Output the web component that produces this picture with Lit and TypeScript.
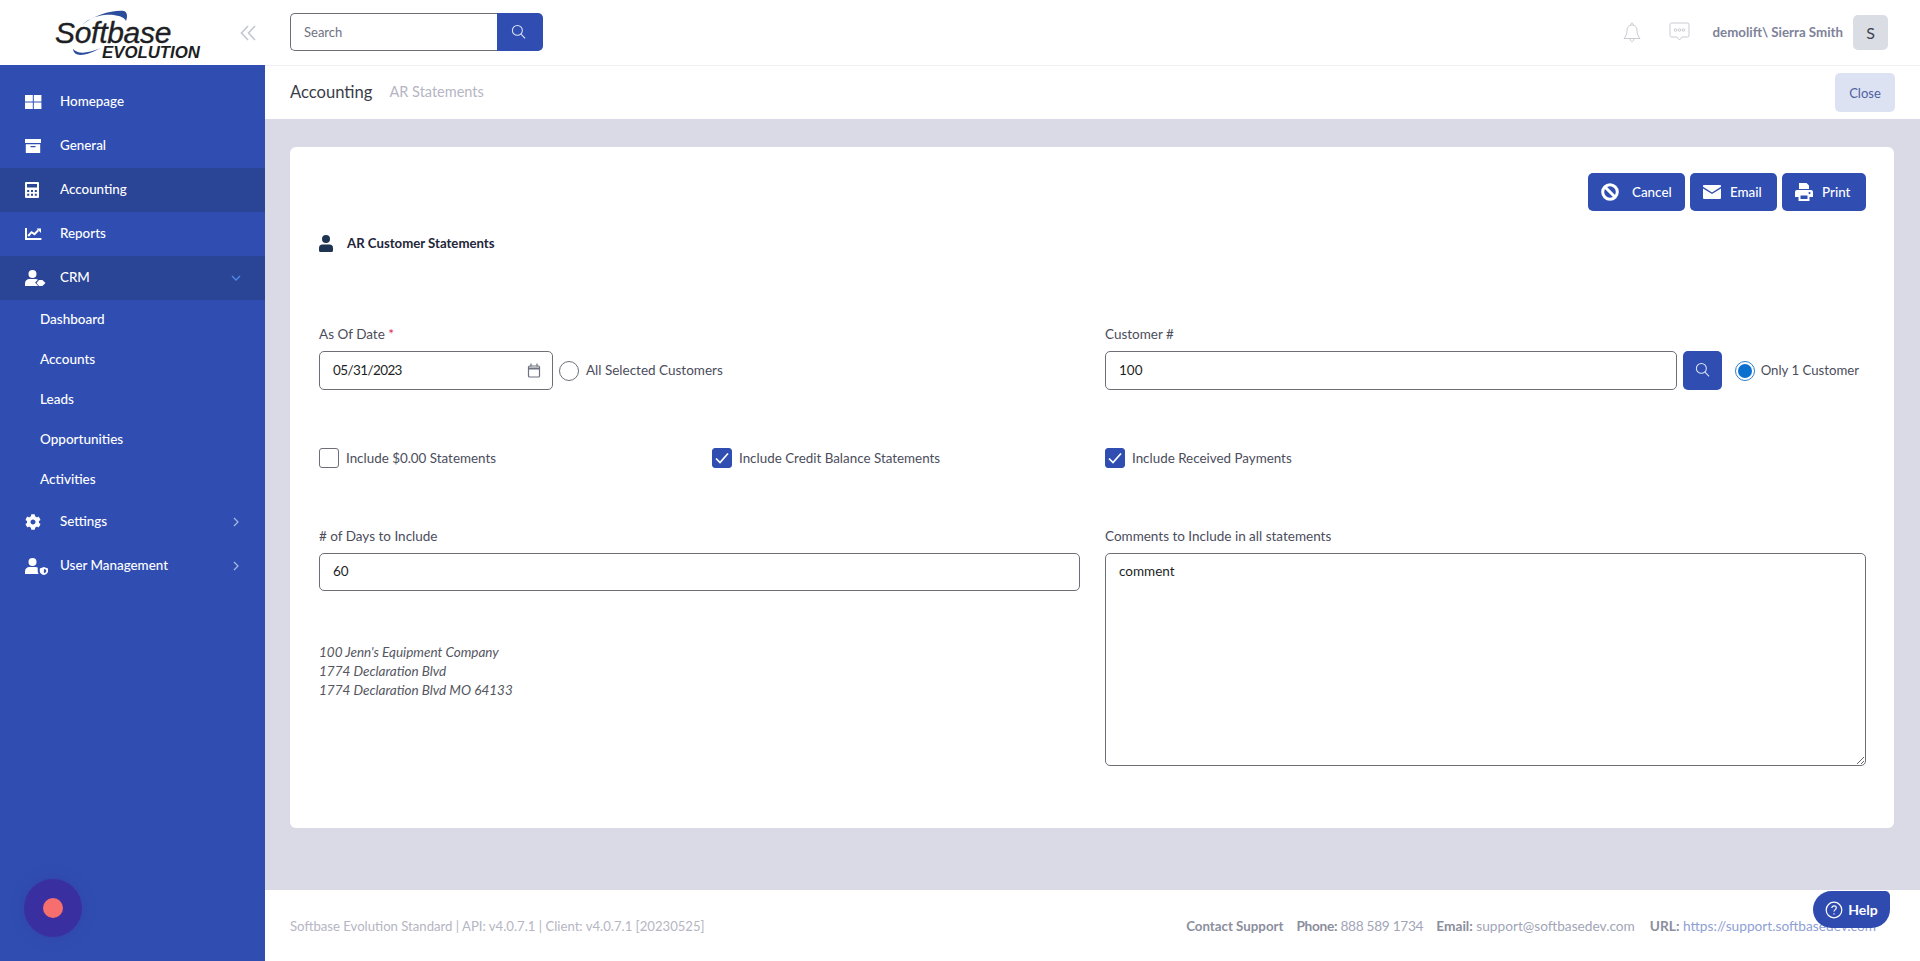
import { LitElement, html, css, svg } from "lit";
import { customElement } from "lit/decorators.js";

const COG =
  "M487.4 315.7l-42.6-24.6c4.3-23.2 4.3-47 0-70.2l42.6-24.6c4.9-2.8 7.1-8.6 5.5-14-11.1-35.6-30-67.8-54.7-94.6-3.8-4.1-10-5.1-14.8-2.3L380.8 110c-17.9-15.4-38.5-27.3-60.8-35.1V25.8c0-5.6-3.9-10.5-9.4-11.7-36.7-8.2-74.3-7.8-109.2 0-5.5 1.2-9.4 6.1-9.4 11.7V75c-22.2 7.9-42.8 19.8-60.8 35.1L88.7 85.5c-4.9-2.8-11-1.9-14.8 2.3-24.7 26.7-43.6 58.9-54.7 94.6-1.7 5.4.6 11.2 5.5 14L67.3 221c-4.3 23.2-4.3 47 0 70.2l-42.6 24.6c-4.9 2.8-7.1 8.6-5.5 14 11.1 35.6 30 67.8 54.7 94.6 3.8 4.1 10 5.1 14.8 2.3l42.6-24.6c17.9 15.4 38.5 27.3 60.8 35.1v49.2c0 5.6 3.9 10.5 9.4 11.7 36.7 8.2 74.3 7.8 109.2 0 5.5-1.2 9.4-6.1 9.4-11.7v-49.2c22.2-7.9 42.8-19.8 60.8-35.1l42.6 24.6c4.9 2.8 11 1.9 14.8-2.3 24.7-26.7 43.6-58.9 54.7-94.6 1.5-5.5-.7-11.3-5.6-14.1zM256 336c-44.1 0-80-35.9-80-80s35.9-80 80-80 80 35.9 80 80-35.9 80-80 80z";

// sidebar icons, all drawn on a 24x18 box
const icons = {
  home: svg`<path fill="currentColor" d="M0 2h7.800v6.600H0zM8.800 2h7.600v6.600H8.800zM0 9.600h7.800V16H0zM8.800 9.600h7.600V16H8.800z" />`,
  box: svg`<path fill="currentColor" fill-rule="evenodd" d="M0 2h16v4H0zM.8 7.200h14.400V16H.8zM5.500 9v1.200h5V9z" />`,
  calc: svg`<path fill="currentColor" fill-rule="evenodd" d="M1 1h12a1 1 0 0 1 1 1v14a1 1 0 0 1-1 1H1a1 1 0 0 1-1-1V2a1 1 0 0 1 1-1zM2 3v3.500h10V3zM2.200 9v2h2V9zM6 9v2h2V9zM9.800 9v2h2V9zM2.200 12.800v2h2v-2zM6 12.800v2h2v-2zM9.800 12.800v2h2v-2z" />`,
  chart: svg`<path fill="currentColor" d="M0 3h2v10h14.400v2H0z" /><path fill="none" stroke="currentColor" stroke-width="2" d="M3.200 11l3.300-3.800 3 2 3.700-3.900" /><path fill="currentColor" d="M11.600 3.600h4.400v4.400z" />`,
  crm: svg`<circle cx="7.500" cy="5" r="4" fill="currentColor" /><path fill="currentColor" d="M0 17v-2.500C0 11.500 2 10 4.500 10h6c1 0 1.900.3 2.500.8l-2.900 2.800 3.100 3.400z" /><path fill="currentColor" d="M14 11h3.400l3.100 2.900-3.100 3.100H14l-2.500-3.100z" />`,
  mgmt: svg`<circle cx="7.500" cy="5" r="4" fill="currentColor" /><path fill="currentColor" d="M0 17v-2.500C0 11.500 2 10 4.500 10h6c.9 0 1.600.2 2.200.5v3.600c0 1.100.3 2.100.9 2.900z" /><path fill="currentColor" fill-rule="evenodd" d="M18.900 10l4.100 1.500v3c0 1.600-1.600 2.800-4.100 3.500-2.500-.7-4.100-1.900-4.100-3.500v-3zM18.900 11.900v4.300c1.400-.4 2.300-1 2.300-1.700v-1.800z" />`,
  cog: svg`<path fill="currentColor" transform="translate(0 1) scale(0.03125)" d="${COG}" />`,
};

const searchIcon = html`<svg width="15" height="15" viewBox="0 0 16 16" fill="none" stroke="currentColor" stroke-width="1.100"><circle cx="6.800" cy="6.800" r="5.300" /><path d="M10.700 10.700l4.300 4.600" /></svg>`;

@customElement("app-root")
export class AppRoot extends LitElement {
  static styles = css`
    :host {
      display: block;
      height: 100vh;
      font-family: "Lato", "Noto Sans", sans-serif;
      font-size: 14px;
      color: #3f4254;
      overflow: hidden;
    }
    * {
      box-sizing: border-box;
    }
    .page {
      display: flex;
      height: 100%;
      position: relative;
    }

    /* sidebar */
    .side {
      width: 265px;
      flex: none;
      background: #304eb2;
      color: #fff;
      display: flex;
      flex-direction: column;
    }
    .brand {
      height: 65px;
      flex: none;
      background: #fff;
      display: flex;
      align-items: center;
      padding-left: 54px;
      gap: 36px;
    }
    .logo {
      width: 150px;
      height: 56px;
      position: relative;
      color: #1d1f24;
      font-family: "Liberation Sans", sans-serif;
      font-style: italic;
    }
    .logo svg {
      position: absolute;
      left: 0;
      top: 0;
    }
    .logo b {
      position: absolute;
      left: 1px;
      top: 16px;
      font-size: 30px;
      font-weight: 400;
      letter-spacing: -0.3px;
      line-height: 23px;
      -webkit-text-stroke: 0.35px #1d1f24;
    }
    .logo i {
      position: absolute;
      left: 48px;
      top: 40px;
      font-size: 16.8px;
      font-weight: 700;
      line-height: 15px;
    }
    .collapse {
      color: #c4c7d2;
      display: flex;
    }
    .menu {
      padding-top: 15px;
      display: flex;
      flex-direction: column;
    }
    .item {
      height: 44px;
      display: flex;
      align-items: center;
      padding: 0 25px;
      font-size: 13.4px;
      font-weight: 500;
    }
    .item.on {
      background: #2a4496;
    }
    .item .ic {
      width: 35px;
      flex: none;
      display: flex;
    }
    .item .name {
      flex: 1;
      padding-bottom: 3px;
    }
    .item .chev {
      color: #a9b8ea;
      display: flex;
      margin-right: -1px;
    }
    .item .chev.open {
      color: #4f8bea;
    }
    .sub {
      height: 40px;
      display: flex;
      align-items: center;
      padding: 0 0 3px 40px;
      font-size: 13.5px;
      font-weight: 500;
    }
    .rec {
      position: absolute;
      left: 24px;
      bottom: 24px;
      width: 58px;
      height: 58px;
      border-radius: 50%;
      background: #3a2fa0;
      box-shadow: 0 0 14px rgba(58, 47, 160, 0.35);
      display: flex;
      align-items: center;
      justify-content: center;
    }
    .rec span {
      width: 20px;
      height: 20px;
      border-radius: 50%;
      background: #f66e6e;
    }

    /* main column */
    .main {
      flex: 1;
      min-width: 0;
      display: flex;
      flex-direction: column;
      background: #d9dae6;
    }
    .top {
      height: 66px;
      flex: none;
      background: #fff;
      border-bottom: 1px solid #eef0f4;
      display: flex;
      align-items: center;
      padding: 0 32px 1px 25px;
    }
    .search {
      display: flex;
      width: 253px;
      height: 38px;
    }
    .search input {
      flex: 1;
      min-width: 0;
      border: 1px solid #6e6e78;
      border-right: 0;
      border-radius: 5px 0 0 5px;
      padding: 0 13px;
      font: inherit;
      font-size: 13px;
      outline: none;
    }
    .search input::placeholder {
      color: #6f7280;
    }
    .search button {
      width: 46px;
      border: 0;
      border-radius: 0 5px 5px 0;
      background: #304eb2;
      color: #dfe5f7;
      display: flex;
      align-items: center;
      justify-content: center;
      padding: 0 3px 2px 0;
    }
    .top .fill {
      flex: 1;
    }
    .bell {
      color: #c3c5cc;
      display: flex;
      margin-right: 27px;
    }
    .chat {
      color: #c3c5cc;
      display: flex;
      margin-right: 23px;
    }
    .who {
      color: #7e8299;
      font-size: 13.3px;
      font-weight: 700;
      margin-right: 10px;
    }
    .avatar {
      width: 35px;
      height: 35px;
      border-radius: 5px;
      background: #dadde3;
      color: #3f4254;
      font-size: 16px;
      display: flex;
      align-items: center;
      justify-content: center;
    }
    .crumbs {
      height: 53px;
      flex: none;
      background: #fff;
      display: flex;
      align-items: center;
      padding: 0 25px;
    }
    .crumbs h1 {
      margin: 0 17px 2px 0;
      font-size: 16.6px;
      font-weight: 400;
      color: #3a3c48;
    }
    .crumbs span {
      color: #b5b5c3;
      font-size: 14.5px;
      flex: 1;
      margin-bottom: 2px;
    }
    .close {
      width: 60px;
      height: 39px;
      border: 0;
      border-radius: 5px;
      background: #dde2f3;
      color: #4e5f9e;
      font: inherit;
      font-size: 13px;
    }
    .body {
      flex: 1;
      min-height: 0;
      padding: 28px 26px 0 25px;
    }

    /* card */
    .card {
      height: 681px;
      background: #fff;
      border-radius: 6px;
      padding: 26px 28px 0 29px;
    }
    .actions {
      display: flex;
      justify-content: flex-end;
      gap: 5px;
    }
    .btn {
      height: 38px;
      border: 0;
      border-radius: 5px;
      background: #304eb2;
      color: #fff;
      font: inherit;
      font-size: 13.4px;
      font-weight: 500;
      display: flex;
      align-items: center;
      padding: 0 0 0 13px;
      gap: 9px;
    }
    .btn.cancel {
      width: 97px;
      gap: 13px;
    }
    .btn.email {
      width: 87px;
    }
    .btn.print {
      width: 84px;
    }
    .title {
      display: flex;
      align-items: center;
      gap: 14px;
      margin-top: 22px;
      height: 20px;
      color: #23253a;
      font-size: 13.2px;
      font-weight: 700;
    }
    .title svg {
      color: #1f3450;
    }
    .row {
      display: grid;
      grid-template-columns: 1fr 1fr;
      column-gap: 25px;
    }
    .row.r1 {
      margin-top: 73px;
    }
    .row.checks {
      grid-template-columns: 368px 368px 1fr;
      margin-top: 58px;
    }
    .row.r3 {
      margin-top: 60px;
    }
    label.cap {
      display: block;
      height: 17px;
      line-height: 17px;
      font-size: 13.5px;
      color: #4b4d5c;
      margin-bottom: 8px;
    }
    label.cap em {
      color: #d9214e;
      font-style: normal;
    }
    .inline {
      display: flex;
      align-items: center;
    }
    .field {
      height: 39px;
      border: 1px solid #6e6e78;
      border-radius: 5px;
      display: flex;
      align-items: center;
      padding: 0 9px 0 13px;
      background: #fff;
    }
    .field.short {
      height: 38px;
    }
    .field input {
      flex: 1;
      min-width: 0;
      border: 0;
      outline: none;
      padding: 0 0 2px;
      font: inherit;
      font-size: 13.5px;
      color: #1e1f26;
      background: transparent;
    }
    .field svg {
      color: #6f7280;
    }
    .date {
      width: 234px;
      flex: none;
      padding-right: 11px;
    }
    .date input {
      letter-spacing: -0.6px;
    }
    .grow {
      flex: 1;
      min-width: 0;
    }
    .find {
      width: 39px;
      height: 39px;
      flex: none;
      margin-left: 6px;
      border: 0;
      border-radius: 5px;
      background: #304eb2;
      color: #dfe5f7;
      display: flex;
      align-items: center;
      justify-content: center;
      padding: 0 0 3px;
    }
    .radio {
      width: 20px;
      height: 20px;
      flex: none;
      border-radius: 50%;
      border: 1px solid #6e6e78;
      background: #fff;
      margin: 0 7px 0 6px;
    }
    .radio.on {
      border: 1.5px solid #2f7fc9;
      margin-left: 13px;
      margin-right: 6px;
      display: flex;
      align-items: center;
      justify-content: center;
    }
    .radio.on::after {
      content: "";
      width: 14px;
      height: 14px;
      border-radius: 50%;
      background: #0b6fd0;
    }
    .opt {
      font-size: 13.5px;
      color: #4b4d5c;
      white-space: nowrap;
      padding-bottom: 2px;
    }
    .radio.on + .opt {
      margin-right: 7px;
      font-size: 13.2px;
    }
    .check {
      display: flex;
      align-items: center;
      gap: 7px;
      height: 20px;
      font-size: 13.4px;
      color: #4b4d5c;
    }
    .box {
      width: 20px;
      height: 20px;
      flex: none;
      border: 1px solid #6e6e78;
      border-radius: 3px;
      display: flex;
      align-items: center;
      justify-content: center;
    }
    .box.on {
      background: #304eb2;
      border-color: #304eb2;
      color: #fff;
    }
    .addr {
      margin-top: 52px;
      font-size: 13.5px;
      line-height: 19.2px;
      font-style: italic;
      color: #55565f;
    }
    textarea {
      display: block;
      width: 100%;
      height: 213px;
      border: 1px solid #6e6e78;
      border-radius: 5px;
      padding: 9px 13px;
      font: inherit;
      font-size: 13.5px;
      color: #1e1f26;
      outline: none;
    }

    /* footer */
    .foot {
      height: 71px;
      flex: none;
      background: #fff;
      display: flex;
      align-items: center;
      padding: 0 44px 0 25px;
      font-size: 13.15px;
      color: #b5b5c3;
    }
    .foot .ver {
      flex: 1;
    }
    .foot .links {
      display: flex;
      align-items: baseline;
      gap: 16px;
      font-size: 13.7px;
      color: #a1a5b7;
    }
    .foot .contact {
      font-size: 13.3px;
      margin-right: -3px;
    }
    .foot .phone {
      letter-spacing: -0.3px;
      margin-right: -3px;
    }
    .foot .mail {
      margin-right: -1px;
    }
    .foot b {
      font-weight: 700;
      color: #8b8e9d;
    }
    .foot a {
      color: #8fa0d4;
    }
    .help {
      position: absolute;
      right: 30px;
      bottom: 33px;
      width: 77px;
      height: 37px;
      border: 0;
      border-radius: 19px 5px 19px 19px;
      background: #2f4bb0;
      color: #fff;
      font: inherit;
      font-size: 14px;
      font-weight: 700;
      display: flex;
      align-items: center;
      justify-content: center;
      gap: 5px;
    }
  `;

  menuItem(icon: unknown, name: string, opts: { on?: boolean; chev?: "open" | "right" } = {}) {
    return html`<div class="item ${opts.on ? "on" : ""}">
      <span class="ic"><svg width="24" height="18" viewBox="0 0 24 18">${icon}</svg></span>
      <span class="name">${name}</span>
      ${opts.chev === "open"
        ? html`<span class="chev open"><svg width="10" height="10" viewBox="0 0 10 10" fill="none" stroke="currentColor" stroke-width="1.300"><path d="M1 3l4 4 4-4" /></svg></span>`
        : opts.chev === "right"
        ? html`<span class="chev"><svg width="10" height="10" viewBox="0 0 10 10" fill="none" stroke="currentColor" stroke-width="1.200"><path d="M3 1l4 4-4 4" /></svg></span>`
        : ""}
    </div>`;
  }

  renderSide() {
    return html`<aside class="side">
      <div class="brand">
        <div class="logo">
          <svg width="150" height="56" viewBox="0 0 150 56">
            <path d="M28 20C40 10 58 5 70 6c3 1 4 5 2 10-2-5-12-7-22-6-8 1-16 4-22 10z" fill="#2a4d9c" />
            <path d="M19 44c1 8 11 8 28-1-15 6-23 6-28 1z" fill="#2a4d9c" />
          </svg>
          <b>Softbase</b>
          <i>EVOLUTION</i>
        </div>
        <span class="collapse">
          <svg width="17" height="16" viewBox="0 0 17 16" fill="none" stroke="currentColor" stroke-width="1.600"><path d="M8 1L1.500 8 8 15M15 1L8.500 8l6.500 7" /></svg>
        </span>
      </div>
      <nav class="menu">
        ${this.menuItem(icons.home, "Homepage")}
        ${this.menuItem(icons.box, "General")}
        ${this.menuItem(icons.calc, "Accounting", { on: true })}
        ${this.menuItem(icons.chart, "Reports")}
        ${this.menuItem(icons.crm, "CRM", { on: true, chev: "open" })}
        ${["Dashboard", "Accounts", "Leads", "Opportunities", "Activities"].map(
          (s) => html`<div class="sub">${s}</div>`
        )}
        ${this.menuItem(icons.cog, "Settings", { chev: "right" })}
        ${this.menuItem(icons.mgmt, "User Management", { chev: "right" })}
      </nav>
    </aside>`;
  }

  renderTop() {
    return html`<header class="top">
      <div class="search">
        <input placeholder="Search" />
        <button>${searchIcon}</button>
      </div>
      <div class="fill"></div>
      <span class="bell">
        <svg width="20" height="21" viewBox="0 0 20 21" fill="none" stroke="currentColor" stroke-width="0.900"><path d="M10 3c3.500 0 5 2.600 5 5.500 0 3.400 1 6 3 8H2c2-2 3-4.600 3-8C5 5.600 6.500 3 10 3zM8.600 3.100C8.600 1.800 9.200 1 10 1s1.400.8 1.400 2.100M8 16.700c.2 2 1.100 3 2 3s1.800-1 2-3" /></svg>
      </span>
      <span class="chat">
        <svg width="21" height="20" viewBox="0 0 21 20" fill="none" stroke="currentColor" stroke-width="0.900"><path d="M2.500 1h16A1.500 1.500 0 0 1 20 2.500v11a1.500 1.500 0 0 1-1.500 1.500h-5.500l-2.500 3-2.500-3H2.500A1.500 1.500 0 0 1 1 13.500v-11A1.500 1.500 0 0 1 2.500 1z" /><circle cx="6.500" cy="8" r="1.300" /><circle cx="10.500" cy="8" r="1.300" /><circle cx="14.500" cy="8" r="1.300" /></svg>
      </span>
      <span class="who">demolift\\ Sierra Smith</span>
      <span class="avatar">S</span>
    </header>`;
  }

  renderForm() {
    return html`<section class="card">
      <div class="actions">
        <button class="btn cancel">
          <svg width="18" height="18" viewBox="0 0 18 18" fill="none" stroke="currentColor" stroke-width="3"><circle cx="9" cy="9" r="7.300" /><path d="M4 4l10 10" /></svg>
          Cancel
        </button>
        <button class="btn email">
          <svg width="18" height="14" viewBox="0 0 18 14" fill="currentColor"><path d="M1 0h16a1 1 0 0 1 1 1v.8l-9 5.700L0 1.800V1a1 1 0 0 1 1-1zM0 3.400l9 5.700 9-5.700V13a1 1 0 0 1-1 1H1a1 1 0 0 1-1-1z" /></svg>
          Email
        </button>
        <button class="btn print">
          <svg width="18" height="18" viewBox="0 0 18 18" fill="currentColor" fill-rule="evenodd"><path d="M4 0h7.500L14 2.500V6H4zM2 7h14a2 2 0 0 1 2 2v5h-3.500v4h-11v-4H0V9a2 2 0 0 1 2-2zM5.500 12.500V16h7v-3.500zM14.500 9a1 1 0 1 0 .01 0z" /></svg>
          Print
        </button>
      </div>
      <div class="title">
        <svg width="14" height="17" viewBox="0 0 14 17" fill="currentColor"><circle cx="7" cy="4" r="4" /><path d="M3.500 9.500h7A3.500 3.500 0 0 1 14 13v2.500a1.500 1.500 0 0 1-1.500 1.500h-11A1.500 1.500 0 0 1 0 15.500V13a3.500 3.500 0 0 1 3.500-3.500z" /></svg>
        AR Customer Statements
      </div>
      <div class="row r1">
        <div>
          <label class="cap">As Of Date <em>*</em></label>
          <div class="inline">
            <div class="field date">
              <input .value=${"05/31/2023"} />
              <svg width="14" height="15" viewBox="0 0 14 15" fill="none" stroke="currentColor" stroke-width="1.200"><rect x="1.500" y="3" width="11" height="11" rx="1" /><path d="M1.500 5.500h11" stroke-width="2" /><path d="M4 .5v3M10 .5v3" /></svg>
            </div>
            <span class="radio"></span>
            <span class="opt">All Selected Customers</span>
          </div>
        </div>
        <div>
          <label class="cap">Customer #</label>
          <div class="inline">
            <div class="field grow"><input .value=${"100"} /></div>
            <button class="find">${searchIcon}</button>
            <span class="radio on"></span>
            <span class="opt">Only 1 Customer</span>
          </div>
        </div>
      </div>
      <div class="row checks">
        <div class="check"><span class="box"></span>Include $0.00 Statements</div>
        <div class="check">
          <span class="box on"><svg width="14" height="12" viewBox="0 0 14 12" fill="none" stroke="currentColor" stroke-width="1.700"><path d="M1 6.500L5 10.500 13 1.500" /></svg></span>
          Include Credit Balance Statements
        </div>
        <div class="check">
          <span class="box on"><svg width="14" height="12" viewBox="0 0 14 12" fill="none" stroke="currentColor" stroke-width="1.700"><path d="M1 6.500L5 10.500 13 1.500" /></svg></span>
          Include Received Payments
        </div>
      </div>
      <div class="row r3">
        <div>
          <label class="cap"># of Days to Include</label>
          <div class="field short"><input .value=${"60"} /></div>
          <div class="addr">
            100 Jenn's Equipment Company<br />
            1774 Declaration Blvd<br />
            1774 Declaration Blvd MO 64133
          </div>
        </div>
        <div>
          <label class="cap">Comments to Include in all statements</label>
          <textarea .value=${"comment"}></textarea>
        </div>
      </div>
    </section>`;
  }

  render() {
    return html`<div class="page">
      ${this.renderSide()}
      <div class="main">
        ${this.renderTop()}
        <div class="crumbs">
          <h1>Accounting</h1>
          <span>AR Statements</span>
          <button class="close">Close</button>
        </div>
        <div class="body">${this.renderForm()}</div>
        <footer class="foot">
          <span class="ver">Softbase Evolution Standard | API: v4.0.7.1 | Client: v4.0.7.1 [20230525]</span>
          <span class="links">
            <b class="contact">Contact Support</b>
            <span class="phone"><b>Phone:</b> 888 589 1734</span>
            <span class="mail"><b>Email:</b> support@softbasedev.com</span>
            <span><b>URL:</b> <a>https://support.softbasedev.com</a></span>
          </span>
        </footer>
      </div>
      <div class="rec"><span></span></div>
      <button class="help">
        <svg width="18" height="18" viewBox="0 0 18 18" fill="none" stroke="currentColor" stroke-width="1.200"><circle cx="9" cy="9" r="7.800" /><path d="M6.800 7c0-1.400 1-2.200 2.300-2.200S11.300 5.600 11.300 6.800c0 1.800-2.300 1.800-2.300 3.700" /><path d="M9 12.300v1.300" /></svg>
        Help
      </button>
    </div>`;
  }
}
